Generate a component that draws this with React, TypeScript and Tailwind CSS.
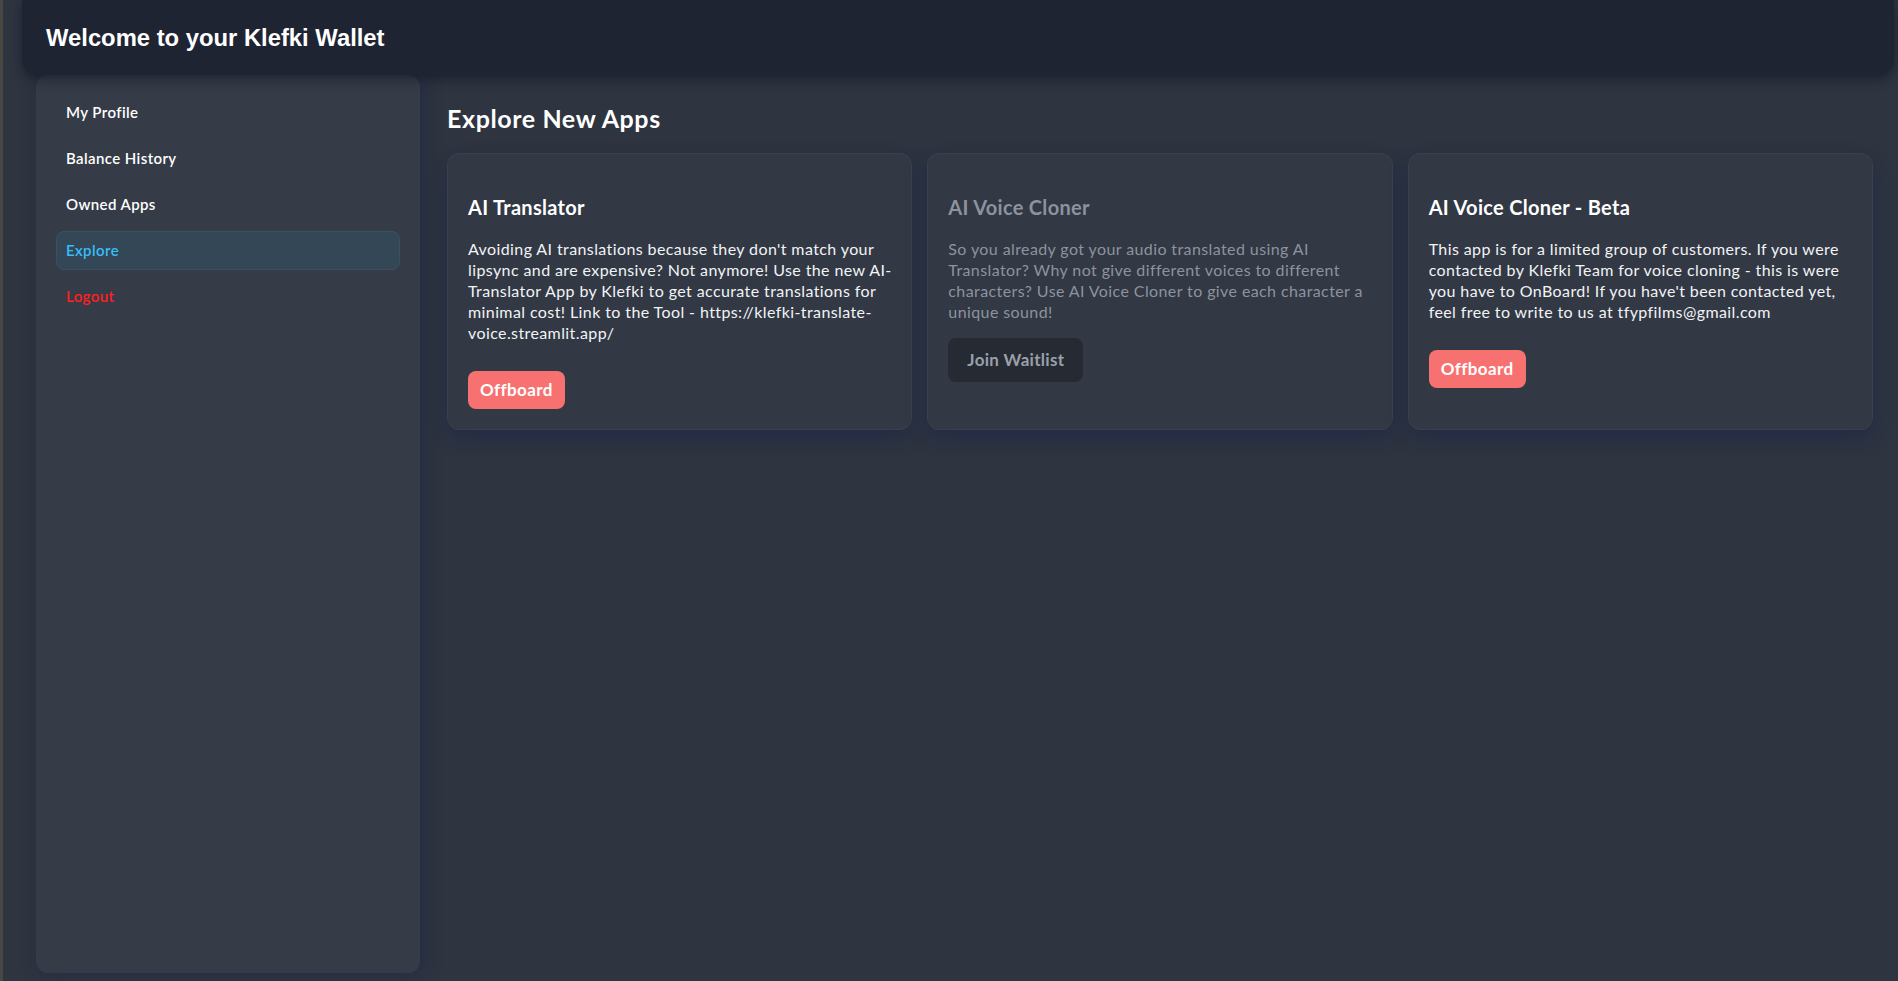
import React from "react";

const bodyFont = { fontFamily: '"Segoe UI", Lato, "Noto Sans", sans-serif' };

function Card({
  title,
  lines,
  dim,
  button,
}: {
  title: string;
  lines: string[];
  dim?: boolean;
  button: "offboard" | "waitlist";
}) {
  return (
    <div className="rounded-xl border border-[#3a404c] bg-[#323844] p-5 shadow-[0_8px_18px_rgba(22,34,78,0.45)]">
      <h3
        className={`mt-[21px] text-[20px] font-bold leading-6 tracking-[0.3px] ${dim ? "text-[#8d939e]" : "text-white"}`}
      >
        {title}
      </h3>
      <p
        className={`mt-[19px] text-[16px] leading-[21px] tracking-[0.4px] ${dim ? "text-[#8d939e]" : "text-[#f1f3f5]"}`}
      >
        {lines.map((l, i) => (
          <span key={i} className="block whitespace-nowrap">
            {l}
          </span>
        ))}
      </p>
      {button === "offboard" ? (
        <button className="mt-[28px] h-[38px] rounded-lg bg-[#f87171] px-[12px] text-[17px] font-bold tracking-[0.4px] text-white">
          Offboard
        </button>
      ) : (
        <button className="mt-[16px] h-[44px] rounded-lg bg-[#262a33] px-[19px] text-[17px] font-bold tracking-[0.3px] text-[#9aa0aa]">
          Join Waitlist
        </button>
      )}
    </div>
  );
}

export default function App() {
  const items = [
    { label: "My Profile", cls: "text-white" },
    { label: "Balance History", cls: "text-white" },
    { label: "Owned Apps", cls: "text-white" },
    { label: "Explore", cls: "text-[#38bdf8] bg-[#334756] border-[#3a5163]", active: true },
    { label: "Logout", cls: "text-[#ff1f1f]" },
  ];
  return (
    <div className="relative flex h-[981px] w-full flex-col overflow-hidden bg-[#2e3440]" style={bodyFont}>
      <div className="absolute left-0 top-0 h-full w-[3px] bg-[#4a4642]" />
      <header className="z-10 ml-[22px] mr-[4px] flex h-[75px] shrink-0 items-center rounded-b-2xl bg-[#1f2433] px-6 shadow-[0_4px_12px_rgba(10,14,28,0.5)]">
        <h1
          className="text-[23.8px] font-bold text-white"
          style={{ fontFamily: '"Liberation Sans", Arial, sans-serif' }}
        >
          Welcome to your Klefki Wallet
        </h1>
      </header>
      <div className="flex min-h-0 flex-1 pb-2">
        <aside className="ml-[36px] w-[384px] shrink-0 rounded-xl bg-[#353b47] px-5 pt-[18px] shadow-[4px_0_16px_rgba(25,35,70,0.5)]">
          <nav className="flex flex-col gap-[7px]">
            {items.map((it) => (
              <div
                key={it.label}
                className={`flex h-[39px] items-center rounded-lg border px-[9px] text-[15px] font-semibold tracking-[0.4px] ${
                  it.active ? it.cls : "border-transparent " + it.cls
                }`}
              >
                {it.label}
              </div>
            ))}
          </nav>
        </aside>
        <main className="flex-1 pl-[27px] pr-[25px] pt-[27px]">
          <h2 className="text-[25px] font-bold leading-8 tracking-[0.6px] text-white">Explore New Apps</h2>
          <div className="mt-[19px] grid grid-cols-3 gap-[15px]">
            <Card
              title="AI Translator"
              lines={[
                "Avoiding AI translations because they don't match your",
                "lipsync and are expensive? Not anymore! Use the new AI-",
                "Translator App by Klefki to get accurate translations for",
                "minimal cost! Link to the Tool - https://klefki-translate-",
                "voice.streamlit.app/",
              ]}
              button="offboard"
            />
            <Card
              title="AI Voice Cloner"
              lines={[
                "So you already got your audio translated using AI",
                "Translator? Why not give different voices to different",
                "characters? Use AI Voice Cloner to give each character a",
                "unique sound!",
              ]}
              dim
              button="waitlist"
            />
            <Card
              title="AI Voice Cloner - Beta"
              lines={[
                "This app is for a limited group of customers. If you were",
                "contacted by Klefki Team for voice cloning - this is were",
                "you have to OnBoard! If you have't been contacted yet,",
                "feel free to write to us at tfypfilms@gmail.com",
              ]}
              button="offboard"
            />
          </div>
        </main>
      </div>
    </div>
  );
}
